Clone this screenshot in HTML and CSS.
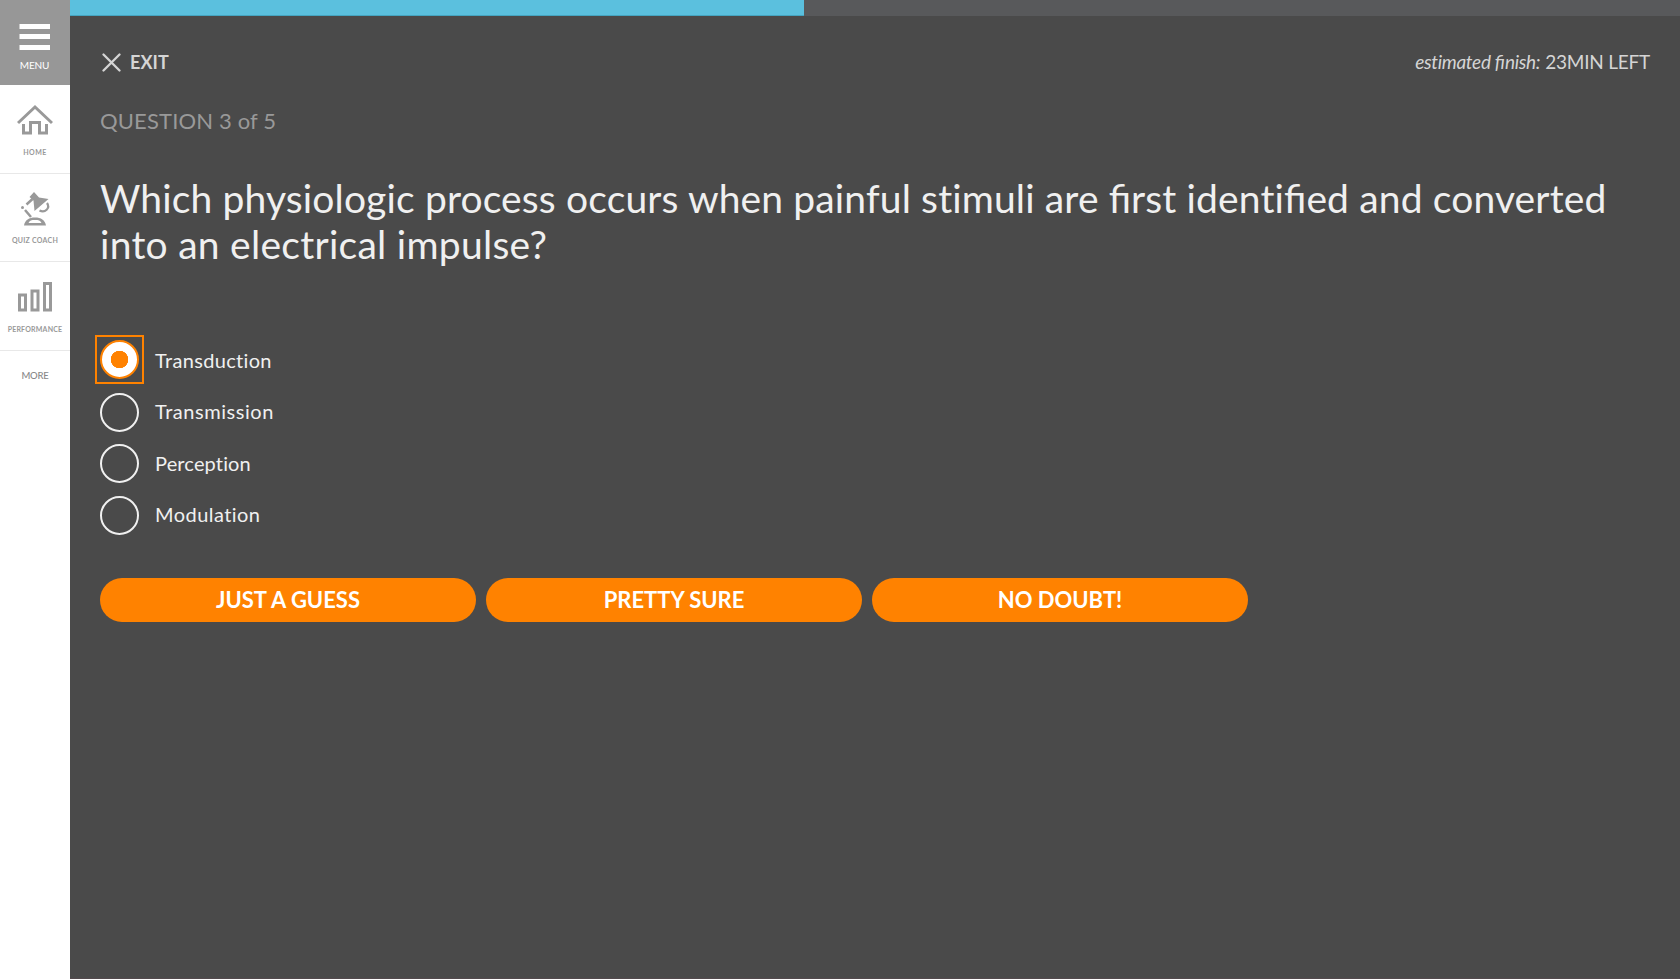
FILE: index.html
```html
<!DOCTYPE html>
<html lang="en">
<head>
<meta charset="utf-8">
<title>Quiz</title>
<link rel="stylesheet" href="styles.css">
</head>
<body>
<div class="app">
  <nav class="sidebar">
    <a class="menu">
      <svg width="32" height="28" viewBox="0 0 32 28"><path d="M.5 1h30.500v5H.5zM.5 11h30.500v5H.5zM.5 22h30.500v5H.5z" fill="#fff"/></svg>
      <span class="menu-label">MENU</span>
    </a>
    <a class="nav-item">
      <svg width="36" height="32" viewBox="0 0 36 32" fill="none" stroke="#999" stroke-width="3"><path d="M1 20 18 4l17 16"/><path d="M6.500 21v9h7V19.500h9V30h7v-9"/></svg>
      <span class="nav-label home-label">HOME</span>
    </a>
    <a class="nav-item">
      <svg width="36" height="36" viewBox="0 0 36 36"><path d="M17 0 22 5.500 31.500 7 17.500 19 16.500 8.500 12.500 5z" fill="#999"/><path d="M15.500 7 9.500 12.500M8 18l6 7" stroke="#999" stroke-width="2.500" fill="none"/><circle cx="5.500" cy="15.500" r="1.500" fill="#999"/><path d="M30 11c3.500 5-2 10.500-7.500 7.500" stroke="#999" stroke-width="2.200" fill="none"/><path d="M7 33.500c1-5.500 5-8 11-8s10 2.500 11 8zM11.500 31h13c-1-2.500-3-3-6.500-3s-5.500.5-6.500 3z" fill="#999" fill-rule="evenodd"/></svg>
      <span class="nav-label coach-label">QUIZ COACH</span>
    </a>
    <a class="nav-item">
      <svg width="36" height="32" viewBox="0 0 36 32" fill="none" stroke="#999" stroke-width="3"><path d="M2.500 15h6v15h-6zM15 11h6v19h-6zM27.500 3.500h6V30h-6z"/></svg>
      <span class="nav-label perf-label">PERFORMANCE</span>
    </a>
    <a class="more">MORE</a>
  </nav>
  <main class="main">
    <div class="progress"><div class="progress-fill"></div></div>
    <div class="content">
      <header class="topbar">
        <a class="exit">
          <svg width="19" height="19" viewBox="0 0 19 19"><path d="m1.500 1.500 16 16M17.500 1.500l-16 16" stroke="#d5d5d5" stroke-width="2.300" stroke-linecap="round"/></svg>
          <span class="exit-label">EXIT</span>
        </a>
        <div class="finish"><em class="finish-note">estimated <span class="joined">fi</span>nish:</em> <span class="finish-time">23MIN LEFT</span></div>
      </header>
      <div class="counter">QUESTION 3 of 5</div>
      <h1 class="question"><span class="line-one">Which physiologic process occurs when painful stimuli are <span class="joined">fi</span>rst identi<span class="joined">fi</span>ed and converted</span><br><span class="line-two">into an electrical impulse?</span></h1>
      <div class="options">
        <label class="option"><span class="radio selected"></span><span class="option-text">Transduction</span></label>
        <label class="option"><span class="radio"></span><span class="option-text transmission">Transmission</span></label>
        <label class="option"><span class="radio"></span><span class="option-text perception">Perception</span></label>
        <label class="option"><span class="radio"></span><span class="option-text modulation">Modulation</span></label>
      </div>
      <div class="actions">
        <button class="answer">JUST A GUESS</button>
        <button class="answer">PRETTY SURE</button>
        <button class="answer">NO DOUBT!</button>
      </div>
    </div>
  </main>
</div>
</body>
</html>
```
FILE: styles.css
```css
* { box-sizing: border-box; }
body { margin: 0; font-family: Lato, "Open Sans", sans-serif; color: #f0f0f0; background: #4a4a4a; }
svg { display: block; }
.app { display: flex; height: 979px; overflow: hidden; }
.sidebar { width: 70px; flex: none; background: #fff; color: #888; }
.menu { display: flex; flex-direction: column; align-items: center; height: 85px; padding: 23px 1px 0 0; background: #979797; color: #fff; }
.menu-label { margin-top: 8px; font-size: 10px; line-height: 12px; letter-spacing: -.2px; }
.nav-item { display: flex; flex-direction: column; align-items: center; justify-content: space-between; height: 88.600px; padding: 18px 0 16px; border-bottom: 1px solid #e8e8e8; }
.nav-label { font-size: 7px; line-height: 10px; font-weight: 700; color: #999; white-space: nowrap; }
.home-label { letter-spacing: .5px; }
.coach-label { letter-spacing: .25px; }
.perf-label { letter-spacing: .2px; }
.more { display: block; padding-top: 19px; text-align: center; font-size: 9.500px; line-height: 12px; font-weight: 500; color: #888; letter-spacing: -.2px; }
.main { flex: 1; min-width: 0; background: #4a4a4a; border-bottom: 1px solid #534a4d; }
.progress { height: 16px; background: #58595b; }
.progress-fill { width: 734px; height: 16px; background: #5bc0de; border-bottom: 1px solid #45a5c1; }
.content { padding: 0 30px; }
.topbar { display: flex; justify-content: space-between; height: 91px; padding-top: 34px; }
.exit { display: flex; height: 24px; align-items: center; gap: 9px; padding-left: 2px; color: #d5d5d5; }
.exit-label { font-size: 18px; line-height: 24px; font-weight: 700; letter-spacing: .05px; }
.finish { font-size: 19px; line-height: 23px; color: #d5d5d5; }
.finish-note { letter-spacing: -.3px; }
.finish-time { letter-spacing: -.22px; }
.joined { letter-spacing: 0; }
.counter { height: 28px; font-size: 22px; line-height: 28px; color: #999; letter-spacing: .15px; }
.question { margin: 40px 0 0; height: 94px; font-size: 39px; line-height: 46px; font-weight: 400; white-space: nowrap; }
.line-one { letter-spacing: .14px; }
.line-two { letter-spacing: .27px; }
.options { margin-top: 65.500px; height: 206px; }
.option { display: flex; height: 51.300px; align-items: center; gap: 16px; }
.radio { position: relative; width: 39px; height: 39px; margin-top: 2px; border: 2px solid #f0f0f0; border-radius: 50%; }
.selected { margin-top: -1px; border-color: #ff8200; background: radial-gradient(circle, #ff8200 0 8.500px, #fff 9px); }
.selected::after { content: ""; position: absolute; inset: -7px; border: 2px solid #ff8200; }
.option-text { font-size: 20px; line-height: 28px; letter-spacing: .33px; }
.transmission { letter-spacing: .55px; }
.perception { letter-spacing: .15px; }
.modulation { letter-spacing: .45px; }
.actions { display: flex; gap: 10px; margin-top: 37.500px; }
.answer { width: 376px; height: 44px; padding: 0; border: 0; border-radius: 22px; background: #ff8200; color: #fff; font: 700 22px/44px Lato, "Open Sans", sans-serif; }
```
